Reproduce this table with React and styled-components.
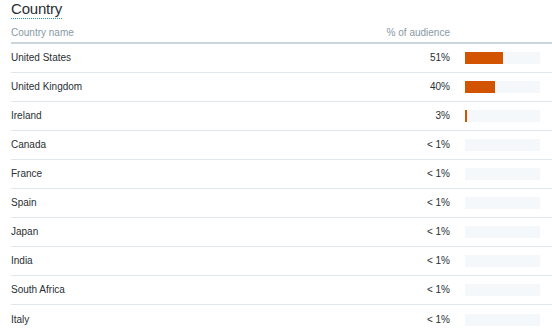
import React from "react";
import styled, { createGlobalStyle } from "styled-components";

const Global = createGlobalStyle`
  html, body { margin: 0; padding: 0; background: #ffffff; }
  body { font-family: "Liberation Sans", Arial, sans-serif; color: #292f33; }
`;

const Panel = styled.section`
  width: 552px;
  padding-left: 11px;
  box-sizing: border-box;
`;

const Title = styled.h2`
  margin: 0;
  display: inline-block;
  font-size: 15px;
  font-weight: 400;
  line-height: 18px;
  padding-bottom: 1px;
  color: #292f33;
  letter-spacing: -0.2px;
  background-image: linear-gradient(to right, #2a8fe0 50%, rgba(255, 255, 255, 0) 50%);
  background-size: 2px 1px;
  background-repeat: repeat-x;
  background-position: left bottom;
`;

const Row = styled.div`
  display: grid;
  grid-template-columns: 1fr auto 75px;
  column-gap: 15px;
  align-items: center;
  padding-right: 12px;
  box-sizing: border-box;
  height: ${(p) => (p.$header ? "25px" : "29px")};
  border-bottom: ${(p) => (p.$header ? "2px solid #ccd6dd" : "1px solid #e1e8ed")};
  font-size: 10px;
  line-height: 12px;
  color: ${(p) => (p.$header ? "#8899a6" : "#292f33")};
  padding-top: ${(p) => (p.$header ? "5px" : "0")};
  &:last-child { border-bottom: none; }
`;

const Pct = styled.span`
  text-align: right;
  white-space: nowrap;
`;

const Track = styled.div`
  height: 12px;
  background: #f5f8fa;
  display: flex;
`;

const Fill = styled.div`
  height: 100%;
  background: #d35400;
`;

const data = [
  ["United States", "51%", 51],
  ["United Kingdom", "40%", 40],
  ["Ireland", "3%", 3],
  ["Canada", "< 1%", 0],
  ["France", "< 1%", 0],
  ["Spain", "< 1%", 0],
  ["Japan", "< 1%", 0],
  ["India", "< 1%", 0],
  ["South Africa", "< 1%", 0],
  ["Italy", "< 1%", 0],
];

export default function App() {
  return (
    <>
      <Global />
      <Panel>
        <Title>Country</Title>
        <Row $header>
          <span>Country name</span>
          <Pct>% of audience</Pct>
          <span />
        </Row>
        {data.map(([name, label, v]) => (
          <Row key={name}>
            <span>{name}</span>
            <Pct>{label}</Pct>
            <Track>
              {v > 0 && <Fill style={{ width: `${Math.max(2, Math.round(v * 0.75))}px` }} />}
            </Track>
          </Row>
        ))}
      </Panel>
    </>
  );
}
